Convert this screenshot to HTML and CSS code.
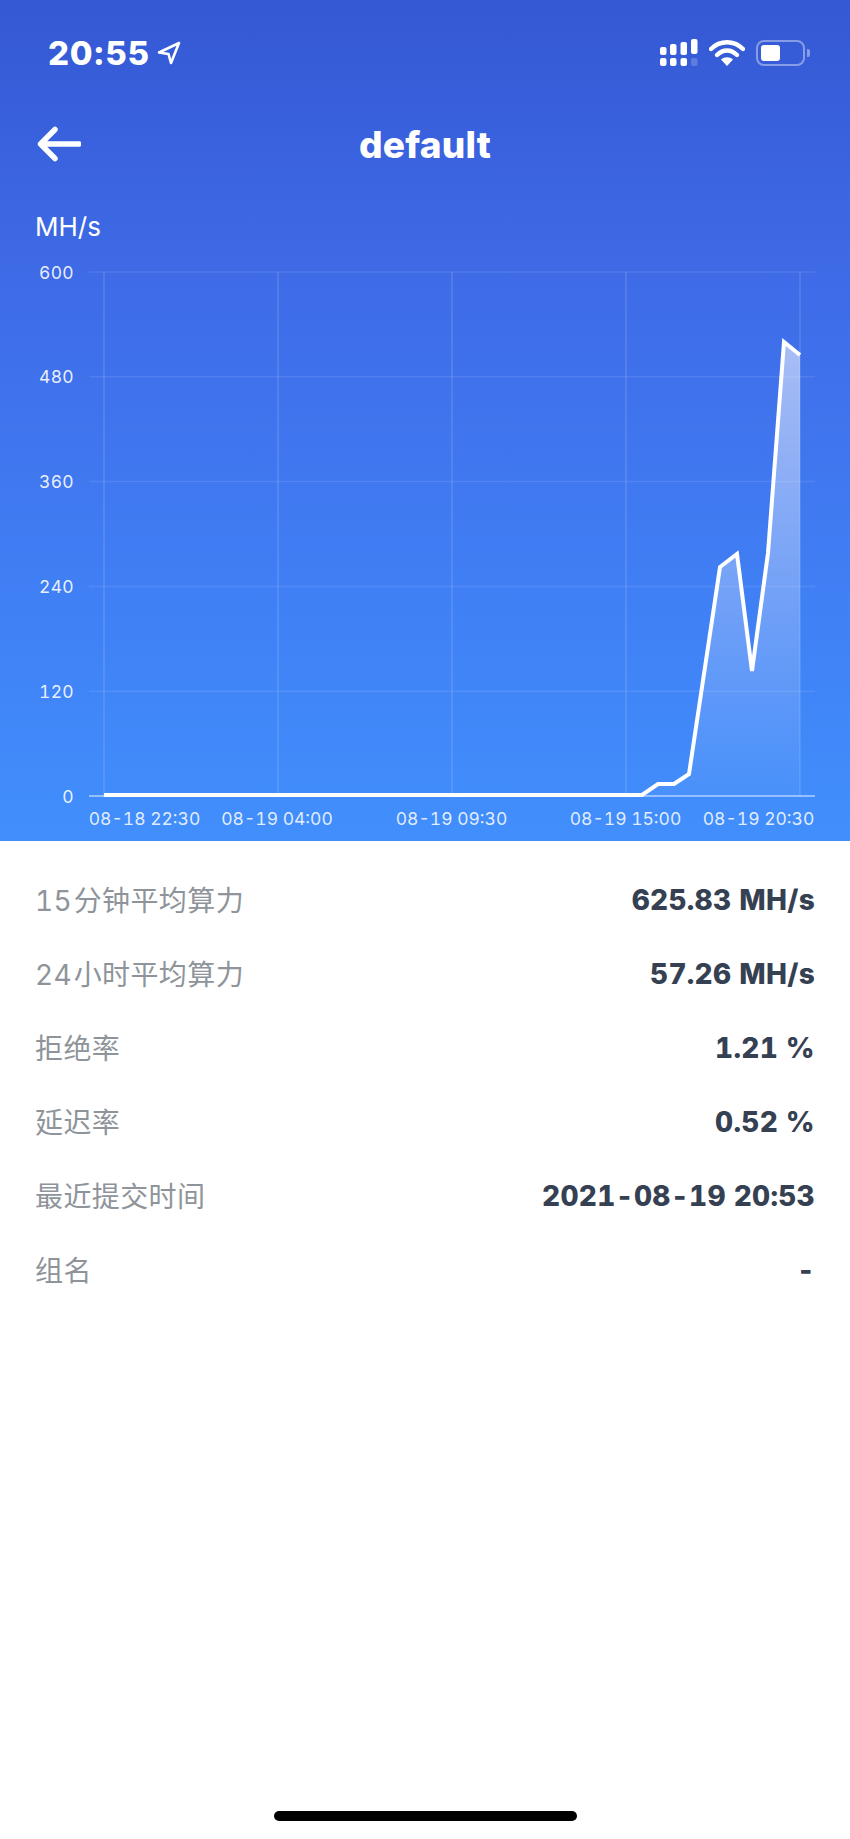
FILE: index.html
```html
<!DOCTYPE html>
<html lang="zh-CN">
<head>
  <meta charset="UTF-8" />
  <meta name="viewport" content="width=device-width, initial-scale=1" />
  <title>default</title>
  <link rel="stylesheet" href="styles.css">
</head>
<body>
  <div class="app">
    <section class="hero">
      <div class="status-bar">
        <div class="status-time">
          <span>20:55</span>
          <svg class="location-icon" width="24" height="24" viewBox="0 0 24 24">
            <path d="M22 2 L2 11.5 L11.5 13 L14 22 Z" fill="none" stroke="#fff" stroke-width="2.6" stroke-linejoin="round" />
          </svg>
        </div>
        <div class="status-icons">
          <svg width="38" height="28" viewBox="0 0 38 28">
            <g fill="#fff">
              <rect x="0" y="8" width="6.5" height="8" rx="2" />
              <rect x="10" y="5" width="6.5" height="11" rx="2" />
              <rect x="20.5" y="3" width="6.5" height="13" rx="2" />
              <rect x="31" y="0" width="6.5" height="15" rx="2" />
              <rect x="0" y="19" width="6.5" height="8" rx="2" />
              <rect x="10" y="19" width="6.5" height="8" rx="2" />
              <rect x="20.5" y="19" width="6.5" height="8" rx="2" />
              <rect x="31" y="19" width="6.5" height="8" rx="2" opacity="0.2" />
            </g>
          </svg>
          <svg width="36" height="26" viewBox="0 0 36 26">
            <path d="M2 9 C11 0 25 0 34 9" fill="none" stroke="#fff" stroke-width="4.4" stroke-linecap="round" />
            <path d="M8 15 C14 9 22 9 28 15" fill="none" stroke="#fff" stroke-width="4.4" stroke-linecap="round" />
            <path d="M12 19.5 C15.5 16.5 20.5 16.5 24 19.5 L18 26 Z" fill="#fff" />
          </svg>
          <div class="battery">
            <div class="battery-body"><div class="battery-fill"></div></div>
            <div class="battery-tip"></div>
          </div>
        </div>
      </div>

      <header class="nav">
        <svg class="back-icon" width="44" height="36" viewBox="0 0 44 36">
          <path d="M42 18 H4 M18 3.5 L3.5 18 L18 32.5" fill="none" stroke="#fff" stroke-width="5.5" stroke-linecap="round" stroke-linejoin="round" />
        </svg>
        <h1>default</h1>
      </header>

      <div class="unit">MH/s</div>

      <svg class="chart" width="850" height="591" viewBox="0 250 850 591">
        <defs>
          <linearGradient id="area-fill" x1="0" y1="342" x2="0" y2="796" gradientUnits="userSpaceOnUse">
            <stop offset="0" stop-color="#fff" stop-opacity="0.55" />
            <stop offset="1" stop-color="#fff" stop-opacity="0.04" />
          </linearGradient>
        </defs>

        <g class="grid-h">
          <line x1="89" y1="272" x2="815" y2="272" />
          <line x1="89" y1="376.8" x2="815" y2="376.8" />
          <line x1="89" y1="481.6" x2="815" y2="481.6" />
          <line x1="89" y1="586.4" x2="815" y2="586.4" />
          <line x1="89" y1="691.2" x2="815" y2="691.2" />
        </g>
        <g class="grid-v">
          <line x1="104" y1="272" x2="104" y2="796" />
          <line x1="278" y1="272" x2="278" y2="796" />
          <line x1="452" y1="272" x2="452" y2="796" />
          <line x1="626" y1="272" x2="626" y2="796" />
          <line x1="800" y1="272" x2="800" y2="796" />
        </g>
        <line class="axis" x1="89" y1="796" x2="815" y2="796" />

        <g class="y-labels">
          <text x="74" y="278.5">600</text>
          <text x="74" y="383.3">480</text>
          <text x="74" y="488.1">360</text>
          <text x="74" y="592.9">240</text>
          <text x="74" y="697.7">120</text>
          <text x="74" y="802.5">0</text>
        </g>
        <g class="x-labels">
          <text x="144.5" y="824.5">08-18 22:30</text>
          <text x="277" y="824.5">08-19 04:00</text>
          <text x="451.5" y="824.5">08-19 09:30</text>
          <text x="625.5" y="824.5">08-19 15:00</text>
          <text x="758.5" y="824.5">08-19 20:30</text>
        </g>

        <path class="area" d="M642 795 L658 784 L674 784 L689 774 L720 567 L737 554 L752 671 L768 553 L784 342 L800 355 L800 796 L642 796 Z" fill="url(#area-fill)" />
        <polyline class="line" points="104,795 642,795 658,784 674,784 689,774 720,567 737,554 752,671 768,553 784,342 800,355" />
      </svg>
    </section>

    <section class="stats">
      <div class="stat-row"><span class="stat-label"><span class="stat-num">15</span>分钟平均算力</span><span class="stat-value">625.83 MH/s</span></div>
      <div class="stat-row"><span class="stat-label"><span class="stat-num">24</span>小时平均算力</span><span class="stat-value">57.26 MH/s</span></div>
      <div class="stat-row"><span class="stat-label">拒绝率</span><span class="stat-value">1.21 %</span></div>
      <div class="stat-row"><span class="stat-label">延迟率</span><span class="stat-value">0.52 %</span></div>
      <div class="stat-row"><span class="stat-label">最近提交时间</span><span class="stat-value">2021-08-19 20:53</span></div>
      <div class="stat-row"><span class="stat-label">组名</span><span class="stat-value">-</span></div>
    </section>

    <div class="home-bar"></div>
  </div>
</body>
</html>
```

FILE: styles.css
```css
* {
  margin: 0;
  padding: 0;
  box-sizing: border-box;
}

body {
  font-family: Inter, "Noto Sans CJK SC", sans-serif;
  background: #fff;
}

.app {
  display: flex;
  flex-direction: column;
  min-height: 1839px;
}

.hero {
  height: 841px;
  background: linear-gradient(180deg, #3558d4 0%, #3f6ce8 35%, #4080f5 72%, #418ffc 100%);
  color: #fff;
}

.status-bar {
  height: 106px;
  padding: 0 40px 0 48px;
  display: flex;
  justify-content: space-between;
  align-items: center;
}

.status-time {
  display: flex;
  align-items: center;
  gap: 7px;
  font-size: 33px;
  font-weight: 800;
  letter-spacing: 0.6px;
}

.status-icons {
  display: flex;
  align-items: center;
  gap: 11px;
}

.battery {
  display: flex;
  align-items: center;
  gap: 2px;
}

.battery-body {
  width: 49px;
  height: 26px;
  padding: 3px;
  border: 2px solid rgba(255, 255, 255, 0.4);
  border-radius: 8px;
}

.battery-fill {
  width: 19px;
  height: 100%;
  background: #fff;
  border-radius: 3px;
}

.battery-tip {
  width: 3px;
  height: 8px;
  background: rgba(255, 255, 255, 0.4);
  border-radius: 0 2px 2px 0;
}

.nav {
  height: 76px;
  padding: 0 0 0 37px;
  display: flex;
  align-items: center;
  position: relative;
}

.nav h1 {
  position: absolute;
  left: 0;
  right: 0;
  text-align: center;
  font-size: 37px;
  font-weight: 800;
  letter-spacing: 0.2px;
}

.unit {
  margin-top: 30px;
  padding-left: 35px;
  font-size: 26px;
  line-height: 30px;
  height: 38px;
}

.chart {
  display: block;
}

.grid-h line {
  stroke: rgba(255, 255, 255, 0.09);
  stroke-width: 1.5;
}

.grid-v line {
  stroke: rgba(255, 255, 255, 0.14);
  stroke-width: 1.5;
}

.axis {
  stroke: rgba(255, 255, 255, 0.6);
  stroke-width: 1.5;
}

.y-labels text {
  fill: rgba(255, 255, 255, 0.9);
  font-size: 17.5px;
  letter-spacing: 0.3px;
  text-anchor: end;
  font-variant-numeric: tabular-nums;
}

.x-labels text {
  fill: rgba(255, 255, 255, 0.85);
  font-size: 17.5px;
  text-anchor: middle;
  font-variant-numeric: tabular-nums;
}

.line {
  fill: none;
  stroke: #fff;
  stroke-width: 4;
  stroke-linejoin: miter;
}

.stats {
  padding: 22px 35px 0;
}

.stat-row {
  height: 74px;
  display: flex;
  justify-content: space-between;
  align-items: center;
}

.stat-label {
  padding-bottom: 2px;
  font-size: 28px;
  letter-spacing: 0.4px;
  color: #8e9499;
  font-variant-numeric: tabular-nums;
}

.stat-num {
  margin-right: 1.5px;
}

.stat-value {
  font-size: 28px;
  font-weight: 800;
  color: #354152;
  letter-spacing: 0.3px;
  font-variant-numeric: tabular-nums;
}

.home-bar {
  width: 303px;
  height: 10px;
  margin: auto auto 18px;
  background: #000;
  border-radius: 5px;
}
```
